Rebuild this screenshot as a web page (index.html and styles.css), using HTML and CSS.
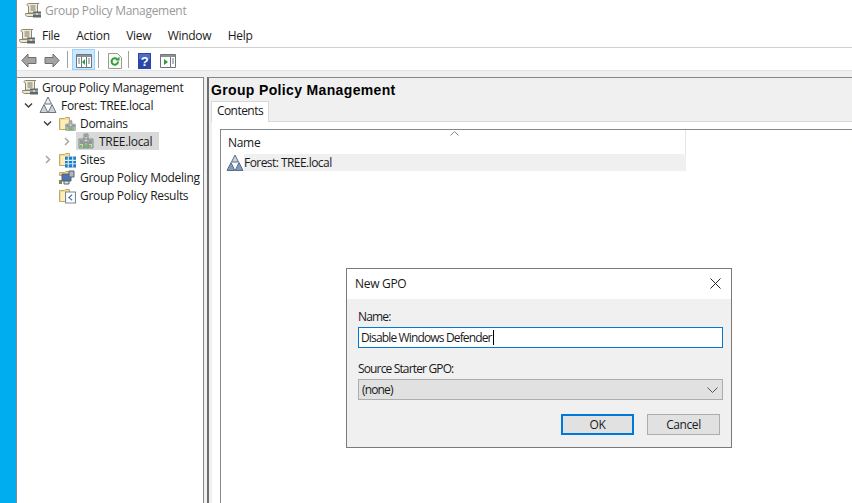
FILE: index.html
```html
<!DOCTYPE html>
<html>
  <head>
    <title>Group Policy Management</title>
    <link rel="stylesheet" href="styles.css">
  </head>

  <body>
    <svg class="sprites" width="0" height="0">
      <symbol id="scroll" viewBox="0 0 16 16">
        <path d="M3.500 1.500c-2 0-2 2.500 0 2.500v7h9V3c0-1 .5-1.500 1.500-1.500z" fill="#f1ecd6" stroke="#8b8672"/>
        <path d="M5.500 4h5M5.500 6h5M5.500 8h5" stroke="#77756a"/>
        <path d="M.5 11.500h8.500l.5 3H2.500c-1.500 0-2-1.500-2-3z" fill="#ece6cc" stroke="#8b8672"/>
        <path d="M8 9.500h8v6H8z" fill="#5d6770"/>
        <path d="M8 12h8" stroke="#c9cdd0"/>
        <path d="M11 11h2v2h-2z" fill="#e4d28a"/>
      </symbol>
      <symbol id="forest" viewBox="0 0 18 18">
        <path d="M9 1l3.500 7h-7z" fill="#eef0f3" stroke="#6d7480"/>
        <path d="M5 8.500l3.800 8H1z" fill="#cdd3da" stroke="#6d7480"/>
        <path d="M13 8.500l4 8H9.200z" fill="#cdd3da" stroke="#6d7480"/>
      </symbol>
      <symbol id="forest-blue" viewBox="0 0 18 18">
        <path d="M9 1l3.500 7h-7z" fill="#c6d3e2" stroke="#5a6b85"/>
        <path d="M5 8.500l3.800 8H1z" fill="#7f9cc0" stroke="#5a6b85"/>
        <path d="M13 8.500l4 8H9.200z" fill="#7f9cc0" stroke="#5a6b85"/>
      </symbol>
      <symbol id="folder" viewBox="0 0 16 16">
        <path d="M.5 3.500h5l1-1h4v12h-10z" fill="#f6dc8f" stroke="#c4a862"/>
        <path d="M2 5h9v9H2z" fill="#fbeebf"/>
      </symbol>
      <symbol id="servers" viewBox="0 0 16 16">
        <path d="M6 1h4v5H6zM1 6h5v9H1zM10 6h5v9h-5z" fill="#c9d0ce" stroke="#7d8786"/>
        <path d="M6 9h4v6H6z" fill="#a5afae" stroke="#7d8786"/>
        <path d="M2 8h3M11 8h3M2 10h3M11 10h3M7 3h2" stroke="#59635f"/>
        <path d="M2 13h2M7 13h2M11 13h2" stroke="#66cc33" stroke-width="2"/>
      </symbol>
    </svg>

    <div class="desktop">
      <div class="taskbar-edge"></div>

      <div class="console">
        <div class="titlebar">
          <svg class="ico16"><use href="#scroll"/></svg>
          <span>Group Policy Management</span>
        </div>

        <div class="menubar">
          <svg class="ico16"><use href="#scroll"/></svg>
          <span class="menu-item file">File</span>
          <span class="menu-item">Action</span>
          <span class="menu-item">View</span>
          <span class="menu-item">Window</span>
          <span class="menu-item">Help</span>
        </div>

        <div class="toolbar">
          <svg class="arrow" width="16" height="15" viewBox="0 0 16 15">
            <path d="M.800 7.500L7 1v3.500h8v6H7V14z" fill="#a3a3a3" stroke="#6f6f6f"/>
          </svg>
          <svg class="arrow" width="16" height="15" viewBox="0 0 16 15">
            <path d="M15.200 7.500L9 1v3.500H1v6h8V14z" fill="#a3a3a3" stroke="#6f6f6f"/>
          </svg>
          <span class="tool-sep"></span>
          <span class="tool-btn active">
            <svg width="16" height="14" viewBox="0 0 16 14">
              <path d="M.5.500h15v13H.500z" fill="#fff" stroke="#6f7678"/>
              <path d="M1 1h14v2H1z" fill="#8b9294"/>
              <path d="M5.500 3v10M10.500 3v10" stroke="#6f7678"/>
              <path d="M2 5h2M2 7h2M2 9h2M12 5h2M12 7h2M12 9h2" stroke="#6f7678"/>
              <path d="M9 5v6L6 8z" fill="#2e9c3c"/>
            </svg>
          </span>
          <span class="tool-sep after-btn"></span>
          <svg class="refresh" width="14" height="16" viewBox="0 0 14 16">
            <path d="M.5.500h9l4 4v11H.500z" fill="#fbfbf6" stroke="#9b9b8e"/>
            <path d="M10 8.500a3.200 3.200 0 1 1-1-2.300" fill="none" stroke="#2e9c3c" stroke-width="2"/>
            <path d="M7.500 7.500h4v-4z" fill="#2e9c3c"/>
          </svg>
          <span class="tool-sep"></span>
          <svg class="help" width="13" height="16" viewBox="0 0 13 16">
            <path d="M0 0h13v16H0z" fill="#2a47a8"/>
            <path d="M1 1h11v5H1z" fill="#4e6cc6"/>
            <text x="6.500" y="13" text-anchor="middle" class="help-mark">?</text>
          </svg>
          <svg class="pane-ico" width="16" height="14" viewBox="0 0 16 14">
            <path d="M.5.500h15v13H.500z" fill="#fff" stroke="#6f7678"/>
            <path d="M1 1h14v2H1z" fill="#8b9294"/>
            <path d="M10.500 3v10" stroke="#6f7678"/>
            <path d="M12 5h2M12 7h2M12 9h2" stroke="#6f7678"/>
            <path d="M4 5v6l4-3z" fill="#2e9c3c"/>
          </svg>
        </div>

        <div class="toolbar-gap"></div>

        <div class="panes">
          <ul class="tree">
            <li class="node">
              <svg class="ico16"><use href="#scroll"/></svg>
              <span class="label">Group Policy Management</span>
            </li>
            <li class="node depth1">
              <svg class="twisty" viewBox="0 0 9 9"><path d="M1 2.500l3.500 3.500L8 2.500" class="tw-open"/></svg>
              <svg class="ico16 forest"><use href="#forest"/></svg>
              <span class="label">Forest: TREE.local</span>
            </li>
            <li class="node depth2">
              <svg class="twisty" viewBox="0 0 9 9"><path d="M1 2.500l3.500 3.500L8 2.500" class="tw-open"/></svg>
              <span class="stack">
                <svg class="ico16"><use href="#folder"/></svg>
                <svg class="badge"><use href="#servers"/></svg>
              </span>
              <span class="label">Domains</span>
            </li>
            <li class="node depth3">
              <svg class="twisty" viewBox="0 0 9 9"><path d="M3 1l3.500 3.500L3 8" class="tw-closed"/></svg>
              <span class="selected">
                <svg class="ico16"><use href="#servers"/></svg>
                <span class="label">TREE.local</span>
              </span>
            </li>
            <li class="node depth2">
              <svg class="twisty" viewBox="0 0 9 9"><path d="M3 1l3.500 3.500L3 8" class="tw-closed"/></svg>
              <span class="stack">
                <svg class="ico16"><use href="#folder"/></svg>
                <svg class="badge" viewBox="0 0 10 11">
                  <path d="M0 1h10v10H0z" fill="#1f7fc4"/>
                  <path d="M3 1v10M7 1v10M0 4.500h10M0 7.500h10" stroke="#d8ebf8"/>
                </svg>
              </span>
              <span class="label">Sites</span>
            </li>
            <li class="node depth2 leaf">
              <span class="stack">
                <svg class="ico16" viewBox="0 0 16 16">
                  <path d="M.5 3.500h5l1-1h4v4h-10z" fill="#f6dc8f" stroke="#c4a862"/>
                  <path d="M3 5h9v7H3z" fill="#4d74b8" stroke="#59636b"/>
                  <path d="M10 2h5v6h-5z" fill="#aeb7c2" stroke="#59636b"/>
                  <path d="M0 11h3v4H0z" fill="#7c8a50"/>
                  <path d="M5 12h5v3H5z" fill="#dfe3e8" stroke="#59636b"/>
                </svg>
              </span>
              <span class="label">Group Policy Modeling</span>
            </li>
            <li class="node depth2 leaf">
              <span class="stack">
                <svg class="ico16"><use href="#folder"/></svg>
                <svg class="badge" viewBox="0 0 10 11">
                  <path d="M.5.500h9v10h-9z" fill="#fff" stroke="#7b8794"/>
                  <path d="M6.500 3L3.500 5.500l3 2.500" fill="none" stroke="#3f73b5"/>
                </svg>
              </span>
              <span class="label">Group Policy Results</span>
            </li>
          </ul>

          <div class="detail">
            <h1 class="detail-title">Group Policy Management</h1>
            <div class="tabs">
              <span class="tab">Contents</span>
            </div>
            <div class="tab-body">
              <div class="list">
                <div class="list-head">
                  <svg class="sort" width="9" height="5" viewBox="0 0 9 5"><path d="M.5 4.500l4-4 4 4" fill="none" stroke="#8a8a8a"/></svg>
                  <span>Name</span>
                </div>
                <div class="list-row">
                  <svg class="row-ico"><use href="#forest-blue"/></svg>
                  <span class="row-text">Forest: TREE.local</span>
                </div>
              </div>
            </div>
          </div>
        </div>
      </div>
    </div>

    <div class="dialog">
      <div class="dialog-title">
        <span>New GPO</span>
        <svg width="11" height="11" viewBox="0 0 11 11"><path d="M.5.500l10 10M10.500.500l-10 10" stroke="#222" fill="none"/></svg>
      </div>
      <div class="dialog-body">
        <label class="field-label">Name:</label>
        <div class="text-input">Disable Windows Defender<span class="caret"></span></div>
        <label class="field-label source">Source Starter GPO:</label>
        <div class="select">
          <span>(none)</span>
          <svg width="11" height="6" viewBox="0 0 11 6"><path d="M.5.500l5 5 5-5" fill="none" stroke="#555"/></svg>
        </div>
        <div class="dialog-buttons">
          <span class="btn default">OK</span>
          <span class="btn">Cancel</span>
        </div>
      </div>
    </div>
  </body>
</html>
```

FILE: styles.css
```css
html, body {
  margin: 0;
  height: 100%;
  overflow: hidden;
}

body {
  font-family: "Open Sans", "Noto Sans", sans-serif;
  font-size: 12px;
  letter-spacing: -0.3px;
  color: #1a1a1a;
  background: #fff;
}

.sprites {
  position: absolute;
}

.ico16 {
  width: 16px;
  height: 16px;
  flex: none;
}

.desktop {
  display: flex;
  height: 503px;
}

.taskbar-edge {
  width: 16px;
  flex: none;
  background: #00adef;
}

.console {
  flex: 1;
  min-width: 0;
  display: flex;
  flex-direction: column;
  border-left: 1px solid #7f8a93;
}

.titlebar {
  height: 24px;
  box-sizing: border-box;
  padding: 0 0 4px 8px;
  display: flex;
  align-items: center;
  gap: 4px;
  color: #999;
}

.menubar {
  height: 23px;
  display: flex;
  align-items: center;
  padding-left: 2px;
  border-bottom: 1px solid #d0d0d0;
}

.menu-item {
  margin-right: 16.500px;
}

.menu-item.file {
  margin-left: 7px;
}

.toolbar {
  height: 22px;
  box-sizing: border-box;
  padding: 1px 0 0 4px;
  display: flex;
  align-items: center;
}

.toolbar > svg {
  margin-top: 2px;
}

.arrow {
  margin-right: 7px;
}

.tool-sep {
  width: 1px;
  height: 17px;
  background: #a0a0a0;
}

.tool-btn {
  width: 23px;
  height: 21px;
  display: flex;
  align-items: center;
  justify-content: center;
  margin: 0 3px 0 4px;
  padding-top: 3px;
  box-sizing: border-box;
}

.tool-btn.active {
  background: #cce8ff;
  border: 1px solid #99d1ff;
}

.tool-sep.after-btn {
  margin-right: 9px;
}

.refresh {
  margin-right: 6px;
}

.help {
  margin: 0 9px;
}

.help-mark {
  font-family: "Liberation Sans", sans-serif;
  font-size: 13px;
  font-weight: bold;
  fill: #fff;
}

.toolbar-gap {
  height: 7px;
  background: #f0f0f0;
  border-top: 1px solid #e3e3e3;
  box-sizing: border-box;
}

.panes {
  flex: 1;
  display: flex;
  min-height: 0;
  background: #f0f0f0;
}

.tree {
  width: 186px;
  flex: none;
  margin: 0;
  padding: 0;
  list-style: none;
  background: #fff;
  border-top: 1px solid #828790;
  border-right: 1px solid #828790;
  overflow: hidden;
}

.node {
  height: 18px;
  display: flex;
  align-items: center;
  white-space: nowrap;
  padding-left: 5px;
}

.node .label {
  margin-left: 4px;
}

.depth1 {
  padding-left: 7px;
}

.depth1 .label {
  margin-left: 4px;
}

.depth2 {
  padding-left: 26px;
}

.depth2 .label {
  margin-left: 5px;
}

.depth3 {
  padding-left: 45px;
}

.leaf {
  padding-left: 42px;
}

.twisty {
  width: 9px;
  height: 9px;
  margin-right: 7px;
  flex: none;
}

.tw-open {
  fill: none;
  stroke: #404040;
  stroke-width: 1.500;
}

.tw-closed {
  fill: none;
  stroke: #a6a6a6;
  stroke-width: 1.500;
}

.forest {
  width: 18px;
  height: 18px;
  margin-left: -1px;
}

.stack {
  position: relative;
  width: 16px;
  height: 16px;
  flex: none;
}

.stack .ico16 {
  display: block;
}

.badge {
  position: absolute;
  right: -1px;
  bottom: -1px;
  width: 11px;
  height: 13px;
}

.selected {
  height: 18px;
  display: flex;
  align-items: center;
  margin-left: -2px;
  padding: 0 7px 0 2px;
  background: #d9d9d9;
}

.selected .label {
  margin-left: 5px;
}

.detail {
  flex: 1;
  min-width: 0;
  margin-left: 3px;
  display: flex;
  flex-direction: column;
  border-top: 1px solid #828790;
  border-left: 2px solid #6e6e6e;
}

.detail-title {
  margin: 0;
  height: 23px;
  padding: 3px 0 0 2px;
  box-sizing: border-box;
  font-family: "Liberation Sans", sans-serif;
  font-size: 14px;
  letter-spacing: 0.35px;
  font-weight: bold;
  line-height: 19px;
  color: #000;
}

.tabs {
  display: flex;
  padding-left: 2px;
  height: 20px;
  position: relative;
  z-index: 1;
}

.tab {
  width: 58px;
  height: 21px;
  box-sizing: border-box;
  text-align: center;
  letter-spacing: -0.55px;
  background: #fff;
  border: 1px solid #d9d9d9;
  border-bottom: none;
}

.tab-body {
  flex: 1;
  margin-left: 3px;
  padding: 7px 0 0 8px;
  background: #fff;
  border-top: 1px solid #d9d9d9;
}

.list {
  height: 100%;
  border-top: 1px solid #828790;
  border-left: 1px solid #828790;
}

.list-head {
  position: relative;
  width: 465px;
  height: 24px;
  box-sizing: border-box;
  padding: 4px 0 0 7px;
  border-right: 1px solid #e5e5e5;
}

.sort {
  position: absolute;
  left: 229px;
  top: 1px;
}

.list-row {
  width: 465px;
  height: 17px;
  display: flex;
  align-items: center;
  background: linear-gradient(to right, #fff 23px, #f0f0f0 23px);
}

.row-ico {
  width: 18px;
  height: 18px;
  margin-left: 5px;
  flex: none;
}

.row-text {
  letter-spacing: -0.55px;
  color: #1a1a1a;
}

.dialog {
  position: absolute;
  left: 346px;
  top: 268px;
  width: 386px;
  height: 180px;
  box-sizing: border-box;
  display: flex;
  flex-direction: column;
  border: 1px solid #7a7a7a;
  background: #f0f0f0;
}

.dialog-title {
  height: 30px;
  box-sizing: border-box;
  padding: 0 10px 2px 8px;
  flex: none;
  display: flex;
  align-items: center;
  justify-content: space-between;
  background: #fff;
}

.dialog-body {
  flex: 1;
  padding: 10px 8px 0 11px;
  display: flex;
  flex-direction: column;
  letter-spacing: -0.85px;
}

.field-label {
  line-height: 16px;
}

.field-label.source {
  margin-top: 13px;
}

.text-input {
  height: 21px;
  box-sizing: border-box;
  margin-top: 2px;
  padding-left: 2px;
  line-height: 19px;
  background: #fff;
  border: 1px solid #0078d7;
  color: #1a1a1a;
  white-space: nowrap;
}

.caret {
  display: inline-block;
  width: 1px;
  height: 15px;
  margin-left: 1px;
  background: #000;
  vertical-align: -3px;
}

.select {
  height: 21px;
  box-sizing: border-box;
  margin-top: 2px;
  padding: 0 4px 0 3px;
  display: flex;
  align-items: center;
  justify-content: space-between;
  background: #e1e1e1;
  border: 1px solid #adadad;
}

.dialog-buttons {
  display: flex;
  justify-content: flex-end;
  gap: 13px;
  margin-top: 14px;
  padding-right: 3px;
}

.btn {
  width: 73px;
  height: 21px;
  box-sizing: border-box;
  display: flex;
  align-items: center;
  justify-content: center;
  letter-spacing: -0.4px;
  background: #e1e1e1;
  border: 1px solid #adadad;
}

.btn.default {
  border: 2px solid #0078d7;
}
```
